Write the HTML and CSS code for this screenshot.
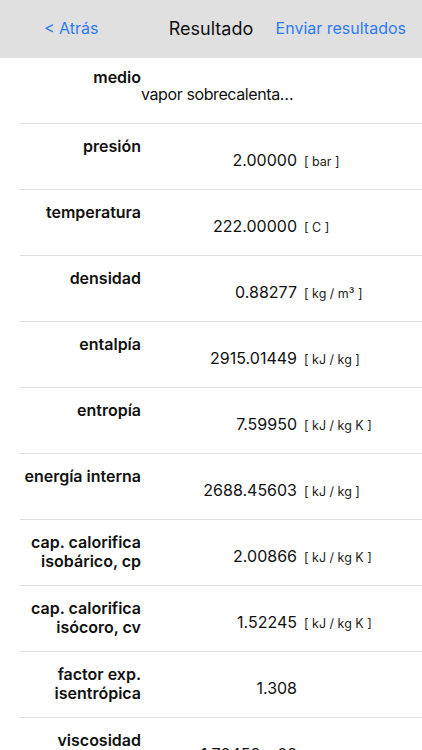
FILE: index.html
```html
<!DOCTYPE html>
<html lang="es">

<head>
    <meta charset="UTF-8">
    <meta name="viewport" content="width=device-width, initial-scale=1.0">
    <title>Resultado</title>
    <link rel="stylesheet" href="styles.css">
</head>

<body>

    <header class="navbar">
        <a class="nav-back" href="#">&lt; Atrás</a>
        <h1 class="nav-title">Resultado</h1>
        <a class="nav-send" href="#">Enviar resultados</a>
    </header>

    <section class="results">
        <div class="row first">
            <div class="label">medio</div>
            <div class="data">
                <span class="value text">vapor sobrecalentado</span>
            </div>
        </div>
        <div class="row">
            <div class="label">presión</div>
            <div class="data">
                <span class="value">2.00000</span>
                <span class="unit">[ bar ]</span>
            </div>
        </div>
        <div class="row">
            <div class="label">temperatura</div>
            <div class="data">
                <span class="value">222.00000</span>
                <span class="unit">[ C ]</span>
            </div>
        </div>
        <div class="row">
            <div class="label">densidad</div>
            <div class="data">
                <span class="value">0.88277</span>
                <span class="unit">[ kg / m³ ]</span>
            </div>
        </div>
        <div class="row">
            <div class="label">entalpía</div>
            <div class="data">
                <span class="value">2915.01449</span>
                <span class="unit">[ kJ / kg ]</span>
            </div>
        </div>
        <div class="row">
            <div class="label">entropía</div>
            <div class="data">
                <span class="value">7.59950</span>
                <span class="unit">[ kJ / kg K ]</span>
            </div>
        </div>
        <div class="row">
            <div class="label">energía interna</div>
            <div class="data">
                <span class="value">2688.45603</span>
                <span class="unit">[ kJ / kg ]</span>
            </div>
        </div>
        <div class="row">
            <div class="label">cap. calorifica isobárico, cp</div>
            <div class="data">
                <span class="value">2.00866</span>
                <span class="unit">[ kJ / kg K ]</span>
            </div>
        </div>
        <div class="row">
            <div class="label">cap. calorifica isócoro, cv</div>
            <div class="data">
                <span class="value">1.52245</span>
                <span class="unit">[ kJ / kg K ]</span>
            </div>
        </div>
        <div class="row">
            <div class="label">factor exp. isentrópica</div>
            <div class="data">
                <span class="value">1.308</span>
            </div>
        </div>
        <div class="row">
            <div class="label">viscosidad</div>
            <div class="data">
                <span class="value">1.70458e-02</span>
                <span class="unit">[mPa s], cp</span>
            </div>
        </div>
    </section>

</body>

</html>
```

FILE: styles.css
```css
* {
    box-sizing: border-box;
}

body {
    margin: 0;
    background-color: #fff;
    color: #000;
    font-family: Inter, "Liberation Sans", sans-serif;
    overflow: hidden;
}

.navbar {
    display: grid;
    grid-template-columns: 1fr auto 1fr;
    align-items: center;
    height: 58px;
    padding: 0 16px 2px;
    background-color: #e0e0e0;
}

.navbar a {
    color: #2d7cf6;
    text-decoration: none;
    font-size: 16px;
}

.nav-back {
    padding-left: 28px;
}

.nav-title {
    margin: 0;
    font-size: 18px;
    font-weight: 400;
    color: #111;
}

.nav-send {
    justify-self: end;
}

.row {
    display: flex;
    height: 66px;
    margin-left: 20px;
    border-bottom: 1px solid #e0e0e0;
}

.label {
    width: 121px;
    padding-top: 13px;
    text-align: right;
    font-size: 16px;
    font-weight: 600;
    line-height: 19px;
    color: #111;
}

.first .label {
    padding-top: 10px;
}

.data {
    display: flex;
    align-items: baseline;
    padding-top: 26px;
    line-height: 20px;
}

.value {
    width: 156px;
    text-align: right;
    font-size: 16px;
    color: #111;
}

.value.text {
    white-space: nowrap;
    overflow: hidden;
    text-overflow: ellipsis;
    letter-spacing: -0.4px;
}

.unit {
    margin-left: 7px;
    font-size: 12.5px;
    color: #222;
    white-space: nowrap;
}
```
